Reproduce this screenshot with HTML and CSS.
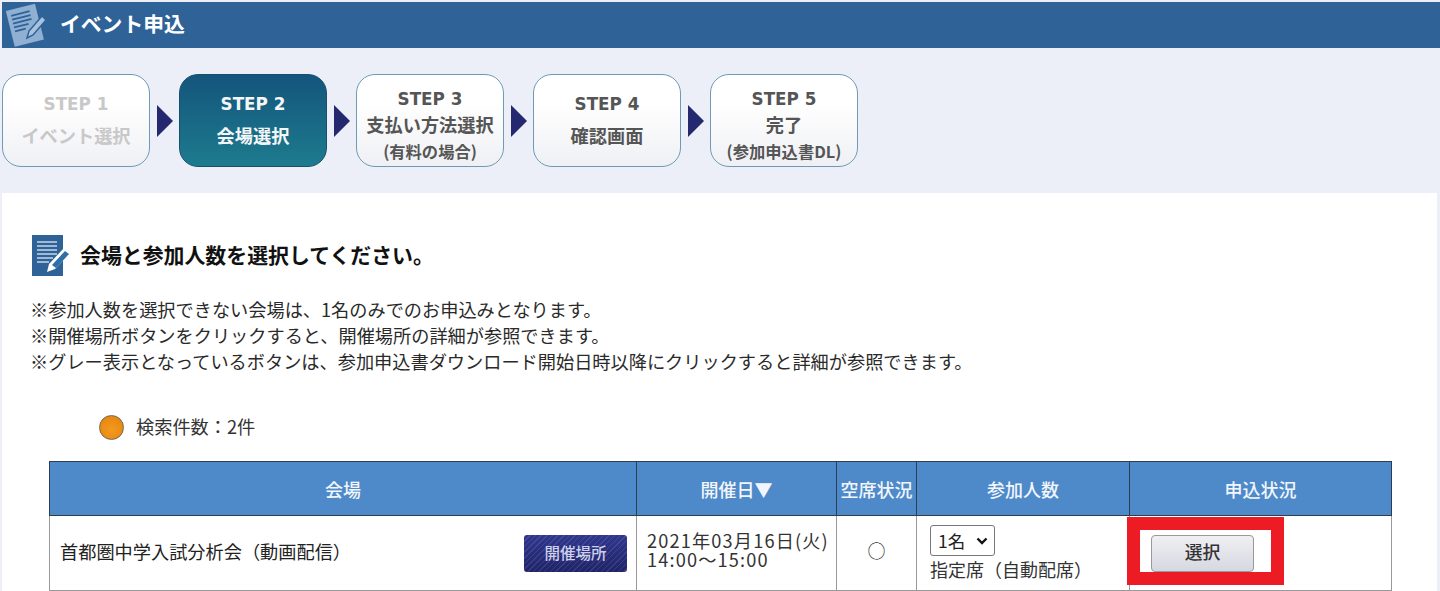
FILE: index.html
```html
<!DOCTYPE html>
<html lang="ja">
<head>
<meta charset="utf-8">
<title>イベント申込</title>
<link rel="stylesheet" href="styles.css">
</head>
<body>
<header class="topbar">
  <svg class="topbar-icon" viewBox="0 0 42 46" aria-hidden="true">
    <g transform="rotate(-14 20 24)">
      <rect x="6" y="5" width="30" height="37" fill="#8fb0d3"/>
      <path d="M10 11h19M10 15h19M10 19h19M10 23h15M10 27h11" stroke="#2f6398" stroke-width="1.8"/>
    </g>
    <path d="M23 36l2-7 13-15 4 4-13 15z" fill="#a9c3df" stroke="#2f6398" stroke-width="1.5"/>
  </svg>
  <h1 class="topbar-title">イベント申込</h1>
</header>

<nav class="steps">
  <div class="step step-done"><b class="step-no">STEP 1</b><span class="step-line">イベント選択</span></div>
  <div class="arrow"></div>
  <div class="step step-active"><b class="step-no">STEP 2</b><span class="step-line">会場選択</span></div>
  <div class="arrow"></div>
  <div class="step step-three"><b class="step-no">STEP 3</b><span class="step-line">支払い方法選択</span><span class="step-sub">(有料の場合)</span></div>
  <div class="arrow"></div>
  <div class="step"><b class="step-no">STEP 4</b><span class="step-line">確認画面</span></div>
  <div class="arrow"></div>
  <div class="step step-three"><b class="step-no">STEP 5</b><span class="step-line">完了</span><span class="step-sub">(参加申込書DL)</span></div>
</nav>

<main class="panel">
  <div class="heading">
    <svg class="heading-icon" viewBox="0 0 40 42" aria-hidden="true">
      <rect x="0" y="1" width="31" height="41" fill="#2f6398"/>
      <path d="M5 8h20M5 12h20M5 16h20M5 20h20M5 24h16M5 28h12" stroke="#c5d6e8" stroke-width="1.6"/>
      <path d="M15 38l2-8 15-16 6 5-15 16z" fill="#fff"/>
      <path d="M20 31l13-14 4 3-13 14z" fill="#2f6fa8"/>
    </svg>
    <h2 class="heading-text">会場と参加人数を選択してください。</h2>
  </div>

  <div class="notes">
    <p>※参加人数を選択できない会場は、1名のみでのお申込みとなります。</p>
    <p>※開催場所ボタンをクリックすると、開催場所の詳細が参照できます。</p>
    <p>※グレー表示となっているボタンは、参加申込書ダウンロード開始日時以降にクリックすると詳細が参照できます。</p>
  </div>

  <div class="count"><span class="dot"></span><span class="count-text">検索件数：2件</span></div>

  <table class="venues">
    <colgroup>
      <col class="c-venue"><col class="c-date"><col class="c-seat"><col class="c-num"><col class="c-status">
    </colgroup>
    <thead>
      <tr><th>会場</th><th>開催日▼</th><th>空席状況</th><th>参加人数</th><th>申込状況</th></tr>
    </thead>
    <tbody>
      <tr>
        <td>
          <div class="venue-cell"><span class="venue-name">首都圏中学入試分析会（動画配信）</span><button class="btn-place" type="button">開催場所</button></div>
        </td>
        <td class="date-cell"><div class="date-line">2021年03月16日(火)</div><div class="date-line">14:00～15:00</div></td>
        <td class="seat-cell">○</td>
        <td class="num-cell">
          <select class="num-select"><option>1名</option></select>
          <div class="seat-type">指定席（自動配席）</div>
        </td>
        <td class="status-cell">
          <button class="btn-select" type="button">選択</button>
          <div class="red-box"></div>
        </td>
      </tr>
    </tbody>
  </table>
</main>
</body>
</html>
```
FILE: styles.css
```css
* { box-sizing: border-box; }
html, body { margin: 0; height: 591px; overflow: hidden; }
body {
  background: #eceff7;
  font-family: "Noto Sans CJK JP", "Noto Sans", sans-serif;
  font-size: 18.2px;
  color: #222;
  padding: 2px 3px 0 2px;
}
h1, h2, p { margin: 0; }

.topbar {
  height: 46px;
  margin-right: -3px;
  background: #2f6398;
  display: flex;
  align-items: center;
  padding-left: 2px;
}
.topbar-icon { width: 42px; height: 46px; flex: none; }
.topbar-title {
  margin: 0 0 4px 14px;
  font-size: 20.8px;
  font-weight: 700;
  color: #fff;
  line-height: 1;
}

.steps {
  display: flex;
  align-items: center;
  height: 145px;
  padding: 26px 0;
}
.step {
  width: 148px;
  height: 93px;
  flex: none;
  border: 1.5px solid #6e9ab5;
  border-radius: 19px;
  background: linear-gradient(#fff 30%, #eff0f4);
  color: #555;
  display: flex;
  flex-direction: column;
  align-items: center;
  justify-content: center;
  gap: 10px;
  font-weight: 700;
}
.step-no { font: 700 16.8px/20px "DejaVu Sans", sans-serif; }
.step-line { font-size: 18.2px; line-height: 22px; font-weight: 700; margin-bottom: 2px; }
.step-sub { font-size: 16.3px; line-height: 20px; font-weight: 700; }
.step-three { gap: 4px; padding-top: 8px; }
.step-done { color: #c8c8c8; }
.step-active {
  background: linear-gradient(#14557c, #1d7b8e);
  border-color: #17506f;
  color: #f4f6f8;
}
.arrow {
  width: 29px;
  flex: none;
  display: flex;
  justify-content: center;
}
.arrow::before {
  content: "";
  width: 0;
  height: 0;
  border-left: 16px solid #23286f;
  border-top: 16px solid transparent;
  border-bottom: 16px solid transparent;
}

.panel {
  background: #fff;
  height: 398px;
  padding: 41px 0 0 28px;
}
.heading { display: flex; align-items: center; height: 42px; margin-left: 2px; }
.heading-icon { width: 40px; height: 42px; flex: none; }
.heading-text {
  margin: 0 0 2px 8px;
  font-size: 20.9px;
  font-weight: 700;
  color: #111;
  line-height: 1;
}
.notes { margin-top: 20px; line-height: 26px; color: #2a2a2a; }
.count {
  display: flex;
  align-items: center;
  height: 26px;
  margin: 40px 0 0 69px;
  color: #333;
}
.count-text { margin-bottom: 2px; }
.dot {
  width: 25px;
  height: 25px;
  border-radius: 50%;
  background: radial-gradient(circle at 50% 60%, #f39a1e, #e2820f);
  border: 1px solid #77664a;
  margin-right: 12px;
}

.venues {
  margin: 21px 0 0 19px;
  width: 1342px;
  table-layout: fixed;
  border-collapse: collapse;
}
.c-venue { width: 587px; }
.c-date { width: 200px; }
.c-seat { width: 80px; }
.c-num { width: 213px; }
.c-status { width: 262px; }
.venues th {
  height: 54px;
  background: #4e8aca;
  border: 1px solid #2c3e50;
  color: #f2f6fb;
  font-size: 18px;
  font-weight: 500;
  padding: 0;
}
.venues td {
  height: 75px;
  border: 1px solid #999;
  padding: 0;
  vertical-align: middle;
}
.venue-cell {
  display: flex;
  align-items: center;
  justify-content: space-between;
  padding: 0 9px 0 10px;
}
.venue-name { margin-bottom: 5px; }
.btn-place {
  width: 103px;
  height: 37px;
  border: 0;
  border-radius: 3px;
  background:
    repeating-linear-gradient(135deg, rgba(255,255,255,.1) 0 1px, transparent 1px 4px),
    linear-gradient(#31378e, #1f2468);
  color: #cdd1ea;
  font: 500 15.5px "Noto Sans CJK JP", sans-serif;
  padding: 0 0 2px;
}
.venues .date-cell { padding: 0 0 6px 10px; letter-spacing: 1.15px; color: #333; }
.date-line { height: 19px; line-height: 19px; }
.venues .seat-cell { padding-bottom: 7px; text-align: center; font-size: 18px; color: #333; }
.venues .num-cell { padding-left: 13px; }
.num-select {
  display: block;
  width: 65px;
  height: 31px;
  font: 17.5px "Noto Sans CJK JP", sans-serif;
  color: #222;
  appearance: none;
  background: #fff url("data:image/svg+xml,%3Csvg xmlns='http://www.w3.org/2000/svg' width='12' height='8'%3E%3Cpath d='M1.5 1.5L6 6l4.500-4.500' fill='none' stroke='%23111' stroke-width='2.400'/%3E%3C/svg%3E") no-repeat right 6px center;
  border: 1px solid #777;
  border-radius: 3px;
  padding-left: 7px;
}
.seat-type { font-size: 18px; line-height: 24px; margin-top: 1px; color: #333; }
.venues .status-cell { position: relative; padding-left: 21px; }
.btn-select {
  display: block;
  width: 103px;
  height: 37px;
  border: 1px solid #999;
  border-radius: 4px;
  background: linear-gradient(#f0f0f3, #d6d8e1);
  color: #333;
  font: 500 17.8px "Noto Sans CJK JP", sans-serif;
  padding: 0 0 4px;
}
.red-box {
  position: absolute;
  left: -3px;
  top: 1px;
  width: 157px;
  height: 68px;
  border: 13px solid #ed1c24;
  pointer-events: none;
}
```
